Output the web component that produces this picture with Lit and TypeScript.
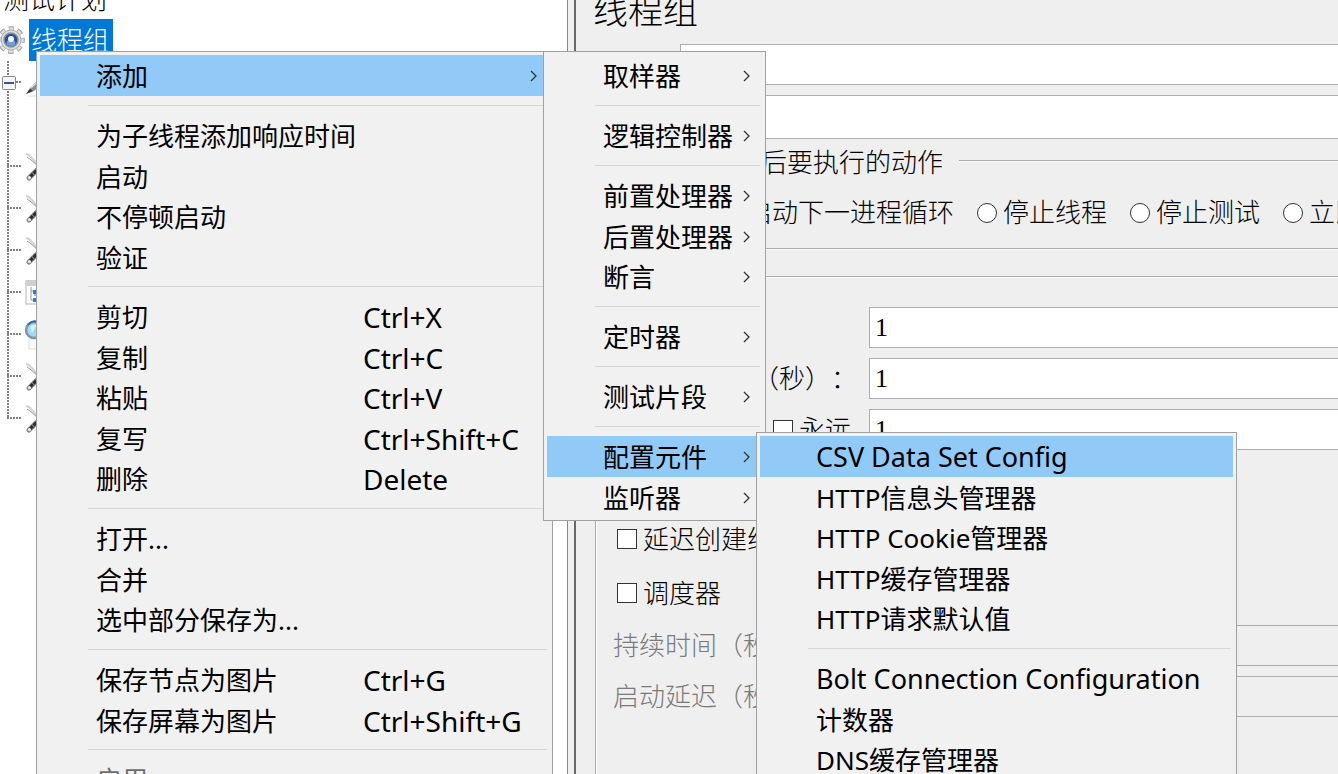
import { LitElement, html, css, svg, nothing } from "lit";
import { customElement, property } from "lit/decorators.js";
import { classMap } from "lit/directives/class-map.js";

interface MenuEntry {
  label: string;
  shortcut?: string;
  submenu?: boolean;
  active?: boolean;
  disabled?: boolean;
  latin?: boolean;
}

type MenuGroup = MenuEntry[];

const MAIN_MENU: MenuGroup[] = [
  [{ label: "添加", submenu: true, active: true }],
  [{ label: "为子线程添加响应时间" }, { label: "启动" }, { label: "不停顿启动" }, { label: "验证" }],
  [
    { label: "剪切", shortcut: "Ctrl+X" },
    { label: "复制", shortcut: "Ctrl+C" },
    { label: "粘贴", shortcut: "Ctrl+V" },
    { label: "复写", shortcut: "Ctrl+Shift+C" },
    { label: "删除", shortcut: "Delete" },
  ],
  [{ label: "打开..." }, { label: "合并" }, { label: "选中部分保存为..." }],
  [
    { label: "保存节点为图片", shortcut: "Ctrl+G" },
    { label: "保存屏幕为图片", shortcut: "Ctrl+Shift+G" },
  ],
  [{ label: "启用", disabled: true }],
];

const ADD_MENU: MenuGroup[] = [
  [{ label: "取样器", submenu: true }],
  [{ label: "逻辑控制器", submenu: true }],
  [
    { label: "前置处理器", submenu: true },
    { label: "后置处理器", submenu: true },
    { label: "断言", submenu: true },
  ],
  [{ label: "定时器", submenu: true }],
  [{ label: "测试片段", submenu: true }],
  [
    { label: "配置元件", submenu: true, active: true },
    { label: "监听器", submenu: true },
  ],
];

const CONFIG_MENU: MenuGroup[] = [
  [
    { label: "CSV Data Set Config", active: true, latin: true },
    { label: "HTTP信息头管理器" },
    { label: "HTTP Cookie管理器" },
    { label: "HTTP缓存管理器" },
    { label: "HTTP请求默认值" },
  ],
  [{ label: "Bolt Connection Configuration", latin: true }, { label: "计数器" }, { label: "DNS缓存管理器" }],
];

@customElement("popup-menu")
export class PopupMenu extends LitElement {
  @property({ attribute: false }) groups: MenuGroup[] = [];

  static styles = css`
    :host {
      display: block;
      box-sizing: border-box;
      padding: 3px;
      border: 1px solid #a0a0a0;
      background: #f1f1f1;
      font: 26px/38px "Noto Sans", "Noto Sans CJK SC", sans-serif;
      color: #000;
    }
    .item {
      display: flex;
      align-items: center;
      box-sizing: border-box;
      width: 100%;
      height: 41px;
      margin: 0;
      padding: 1px 12px 0 56px;
      border: 0;
      background: none;
      font: inherit;
      color: inherit;
      text-align: left;
      white-space: nowrap;
    }
    .item:nth-child(even) {
      height: 40px;
    }
    .active {
      background: #91c9f7;
    }
    .item:disabled {
      color: #6d6d6d;
    }
    .label {
      flex: 1;
    }
    .keyed .label {
      flex: 0 0 267px;
    }
    .latin {
      font-size: 27px;
    }
    .shortcut {
      font-size: 28px;
    }
    .rule {
      height: 1px;
      margin: 9px 2px 9px 48px;
      border: 0;
      background: #d7d7d7;
    }
    .arrow {
      flex: none;
      width: 7px;
      height: 12px;
    }
  `;

  private renderEntry(entry: MenuEntry) {
    return html`<button
      class=${classMap({ item: true, active: !!entry.active, keyed: !!entry.shortcut })}
      role="menuitem"
      ?disabled=${entry.disabled}
    >
      <span class=${classMap({ label: true, latin: !!entry.latin })}>${entry.label}</span>
      ${entry.shortcut ? html`<span class="shortcut">${entry.shortcut}</span>` : nothing}
      ${entry.submenu
        ? html`<svg class="arrow" viewBox="0 0 7 12" aria-hidden="true">
            <path d="M1 1l5 5-5 5" fill="none" stroke="#333" stroke-width="1.3" />
          </svg>`
        : nothing}
    </button>`;
  }

  render() {
    return this.groups.map(
      (group, i) => html`${i ? html`<hr class="rule" />` : nothing}
        <div role="group">${group.map((e) => this.renderEntry(e))}</div>`
    );
  }
}

type NodeIcon = "pen" | "none" | "tools" | "table" | "lens";

const NODES: NodeIcon[] = ["pen", "none", "tools", "tools", "tools", "table", "lens", "tools", "tools"];

@customElement("plan-tree")
export class PlanTree extends LitElement {
  static styles = css`
    :host {
      display: block;
      font: 26px/40px "Noto Sans CJK SC", sans-serif;
      font-weight: 300;
      color: #000;
    }
    .list {
      margin: -23px 0 0;
      padding: 0;
      list-style: none;
    }
    .row {
      display: flex;
      align-items: center;
      height: 42px;
      white-space: nowrap;
    }
    .root {
      padding-left: 3px;
    }
    .gear {
      flex: none;
      width: 26px;
      height: 30px;
      margin-right: 3px;
    }
    .selected {
      padding: 0 4px 2px 2px;
      background: #0078d7;
      color: #fff;
    }
    .guide {
      flex: none;
      width: 24px;
      height: 42px;
    }
    .icon {
      flex: none;
      width: 32px;
      height: 42px;
    }
  `;

  private icon(kind: NodeIcon) {
    switch (kind) {
      case "pen":
        return svg`<path d="M2 33L6 27L14 19L19 22L10 30Z" fill="#8d8d8d"/><path d="M2 33L6 28L9 30Z" fill="#333"/><path d="M7 27L14 20" stroke="#ddd" stroke-width="1.5"/><path d="M4 35H26" stroke="#ddd"/>`;
      case "tools":
        return svg`<path d="M2 9L5 10L14 20" fill="none" stroke="#d4d4d4" stroke-width="2.200"/><path d="M3 12L6 14L14 21" fill="none" stroke="#9a9a9a" stroke-width="1"/><path d="M5 33L13 25" stroke="#8a8a8a" stroke-width="5" stroke-linecap="round"/><path d="M6 32L14 24" stroke="#2b2b2b" stroke-width="3" stroke-dasharray="4 1"/><circle cx="5.500" cy="32.500" r="1.500" fill="#eee"/>`;
      case "table":
        return svg`<rect x="2" y="10" width="26" height="23" fill="#fff" stroke="#ccc" stroke-width="1.500"/><rect x="2" y="9" width="26" height="6" fill="#d0d0d0"/><path d="M7 16V29H11M7 20H11" fill="none" stroke="#999"/><path d="M9 19h4v4h-4zM9 27h4v4h-4z" fill="#2f78dc"/><path d="M10 24h5" stroke="#2f78dc"/>`;
      case "lens":
        return svg`<path d="M5 22H25V36H5Z" fill="#fafafa" stroke="#ddd"/><circle cx="10" cy="17" r="8" fill="#9edcf2" stroke="#8194a4" stroke-width="2.500"/><path d="M4 12a8 8 0 0 1 10-3" fill="none" stroke="#3268a5" stroke-width="2"/><path d="M6 14Q9 11 13 12L8 20Z" fill="#d4f4fc"/>`;
      default:
        return nothing;
    }
  }

  private renderNode(kind: NodeIcon, index: number) {
    const last = index === NODES.length - 1;
    const first = index === 0;
    return html`<li class="row" role="treeitem">
      <svg class="guide" viewBox="0 0 24 42" aria-hidden="true">
        <path d=${last ? "M8 0V22" : "M8 0V42"} stroke="#808080" stroke-width="2" stroke-dasharray="2 1" />
        ${kind === "none" ? nothing : svg`<path d="M7 21H22" stroke="#808080" stroke-width="2" stroke-dasharray="2 1"/>`}
        ${first
          ? svg`<rect x="2.500" y="15.500" width="13" height="13" rx="1" fill="#f5f5f5" stroke="#888"/><path d="M4 22H14" stroke="#3c55a5" stroke-width="2"/>`
          : nothing}
      </svg>
      <svg class="icon" viewBox="0 0 32 42" aria-hidden="true">${this.icon(kind)}</svg>
    </li>`;
  }

  render() {
    return html`<ul class="list" role="tree">
      <li class="row root" role="treeitem">测试计划</li>
      <li class="row" role="treeitem" aria-selected="true">
        <svg class="gear" viewBox="0 0 26 30" aria-hidden="true">
          <circle cx="11" cy="15" r="11.500" fill="none" stroke="#9a9a9a" stroke-width="4.500" stroke-dasharray="5.200 3.832" stroke-dashoffset="2.600" />
          <circle cx="11" cy="15" r="11" fill="none" stroke="#dedede" stroke-width="3.600" stroke-dasharray="4 4.639" stroke-dashoffset="2" />
          <circle cx="11" cy="15" r="10" fill="#dcdcdc" stroke="#b0b0b0" />
          <circle cx="11" cy="15" r="7" fill="#2d5193" stroke="#8a93a5" stroke-width="1.500" />
          <ellipse cx="11" cy="18" rx="4.500" ry="3" fill="#6fa0d8" />
          <circle cx="11" cy="14" r="3" fill="#f4f8ff" />
        </svg>
        <span class="selected">线程组</span>
      </li>
      ${NODES.map((n, i) => this.renderNode(n, i))}
    </ul>`;
  }
}

@customElement("thread-group-form")
export class ThreadGroupForm extends LitElement {
  static styles = css`
    :host {
      display: block;
      overflow: hidden;
      box-sizing: border-box;
      padding-left: 17px;
      background: #efefef;
      font: 26px/30px "Noto Sans CJK SC", sans-serif;
      font-weight: 300;
      text-spacing-trim: space-all;
      color: #000;
    }
    .form {
      margin-right: -24px;
    }
    .title {
      margin: -13px 0 13px;
      font-size: 35px;
      font-weight: 300;
      line-height: 44px;
    }
    .head {
      display: grid;
      grid-template-columns: 87px 1fr;
      grid-template-rows: 41px 44px;
      row-gap: 10px;
      align-items: center;
    }
    .text {
      box-sizing: border-box;
      width: 100%;
      min-width: 0;
      height: 100%;
      margin: 0;
      padding: 0 5px;
      border: 1px solid #abadb3;
      border-radius: 0;
      background: #fff;
      font-family: "Liberation Serif", serif;
      font-size: 26px;
      font-weight: 400;
      color: #000;
    }
    .text:disabled {
      background: #efefef;
    }
    .box {
      min-width: 0;
      margin: 7px 0 0 2px;
      padding: 16px 16px 15px;
      border: 2px groove #fff;
      white-space: nowrap;
    }
    .box + .box {
      margin-top: 12px;
      padding: 15px 0 120px 16px;
    }
    .caption {
      padding: 0 16px 0 0;
      margin-left: -8px;
    }
    .choices {
      display: flex;
      gap: 23px;
      height: 41px;
      padding-left: 6px;
    }
    .choice {
      display: flex;
      align-items: center;
      gap: 6px;
    }
    .choice span,
    .fields > label {
      padding-bottom: 3px;
    }
    .choice input {
      appearance: none;
      flex: none;
      box-sizing: border-box;
      width: 20px;
      height: 20px;
      margin: 0;
      border: 1px solid #333;
      background: #fff;
    }
    .choice input[type="radio"] {
      border-radius: 50%;
    }
    .choice input[type="radio"]:checked {
      background: radial-gradient(#333 0 5px, #fff 6px);
    }
    .fields {
      display: grid;
      grid-template-columns: 244px 1fr;
      grid-auto-rows: 41px;
      gap: 10px 12px;
      align-items: center;
    }
    .cell {
      display: flex;
      justify-content: space-between;
      align-items: center;
      padding-right: 6px;
    }
    .end {
      display: flex;
      justify-content: flex-end;
    }
    .checks {
      display: grid;
      grid-auto-rows: 40px;
      gap: 14px;
      margin: 69px 0 12px;
      padding-left: 4px;
    }
    .off {
      color: #7a7a7a;
    }
  `;

  render() {
    return html`<form class="form">
      <h1 class="title">线程组</h1>
      <div class="head">
        <label for="name">名称：</label>
        <input class="text" id="name" type="text" />
        <label for="note">注释：</label>
        <input class="text" id="note" type="text" />
      </div>
      <fieldset class="box">
        <legend class="caption">在取样器错误后要执行的动作</legend>
        <div class="choices">
          ${["继续", "启动下一进程循环", "停止线程", "停止测试", "立即停止测试"].map(
            (t, i) =>
              html`<label class="choice"><input type="radio" name="onerror" ?checked=${i === 0} /><span>${t}</span></label>`
          )}
        </div>
      </fieldset>
      <fieldset class="box">
        <legend class="caption">线程属性</legend>
        <div class="fields">
          <label for="threads">线程数：</label>
          <input class="text" id="threads" type="text" value="1" />
          <label class="end" for="ramp">Ramp-Up时间（秒）：</label>
          <input class="text" id="ramp" type="text" value="1" />
          <div class="cell">
            <label for="loops">循环次数</label>
            <label class="choice"><input type="checkbox" /><span>永远</span></label>
          </div>
          <input class="text" id="loops" type="text" value="1" />
        </div>
        <div class="checks">
          <label class="choice"><input type="checkbox" /><span>延迟创建线程直到需要</span></label>
          <label class="choice"><input type="checkbox" /><span>调度器</span></label>
        </div>
        <div class="fields">
          <label class="off" for="duration">持续时间（秒）</label>
          <input class="text" id="duration" type="text" disabled />
          <label class="off" for="delay">启动延迟（秒）</label>
          <input class="text" id="delay" type="text" disabled />
        </div>
      </fieldset>
    </form>`;
  }
}

@customElement("app-root")
export class AppRoot extends LitElement {
  static styles = css`
    :host {
      display: block;
      position: relative;
      height: 100vh;
      overflow: hidden;
      background: #efefef;
    }
    .split {
      display: flex;
      height: 100%;
    }
    .tree {
      flex: 0 0 567px;
      overflow: hidden;
      border-right: 1px solid #828790;
      background: #fff;
    }
    .divider {
      flex: 0 0 6px;
      border-right: 2px solid #696969;
      background: #f0f0f0;
    }
    .panel {
      flex: 1;
      min-width: 0;
    }
    .menu {
      position: absolute;
    }
    .main {
      left: 36px;
      top: 51px;
      width: 517px;
    }
    .add {
      left: 543px;
      top: 51px;
      width: 223px;
    }
    .config {
      left: 756px;
      top: 432px;
      width: 481px;
    }
  `;

  render() {
    return html`<div class="split">
        <plan-tree class="tree"></plan-tree>
        <div class="divider"></div>
        <thread-group-form class="panel"></thread-group-form>
      </div>
      <popup-menu class="menu main" role="menu" .groups=${MAIN_MENU}></popup-menu>
      <popup-menu class="menu add" role="menu" .groups=${ADD_MENU}></popup-menu>
      <popup-menu class="menu config" role="menu" .groups=${CONFIG_MENU}></popup-menu>`;
  }
}
